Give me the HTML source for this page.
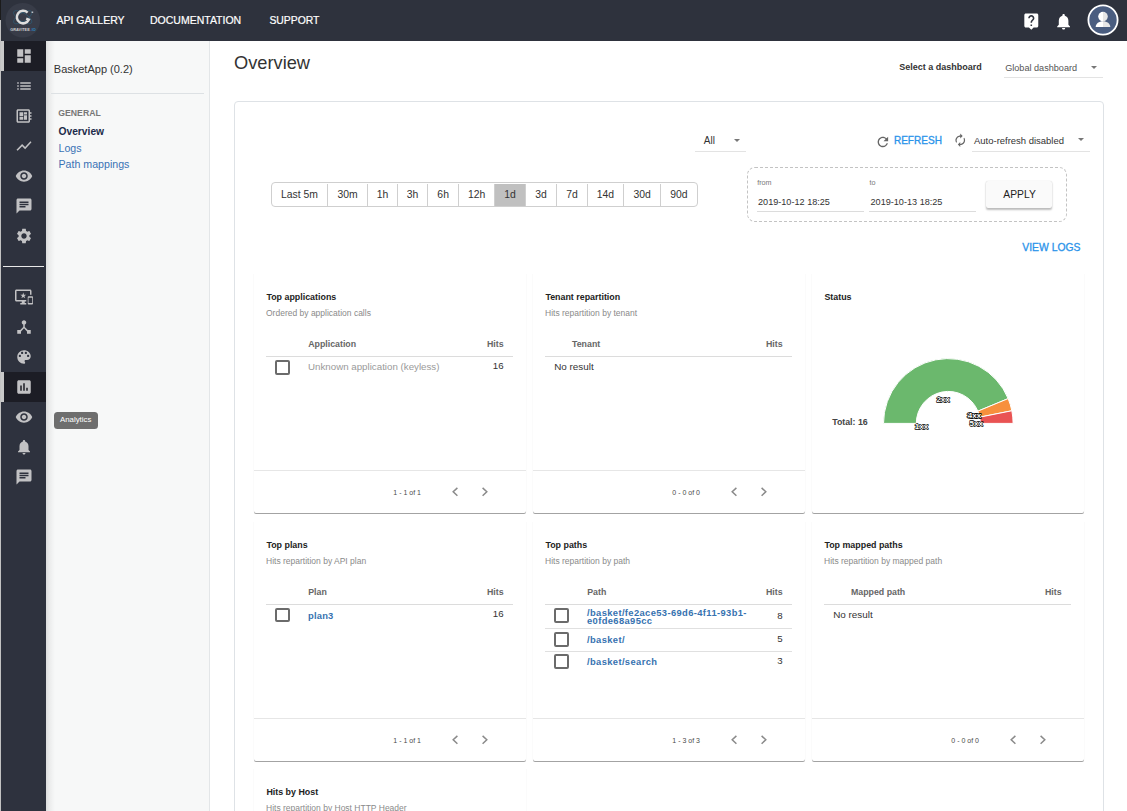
<!DOCTYPE html>
<html><head><meta charset="utf-8"><title>Overview</title><style>
*{box-sizing:border-box;margin:0;padding:0}
html,body{width:1127px;height:811px;overflow:hidden;background:#fff;font-family:"Liberation Sans",sans-serif;color:#333;position:relative}
.a{position:absolute}
.ic{position:absolute;overflow:visible}
.t{position:absolute;white-space:nowrap}
.tri{position:absolute;width:0;height:0;border-left:3px solid transparent;border-right:3px solid transparent;border-top:3.6px solid #777}
.card{position:absolute;background:#fff;border-radius:0 0 2px 2px;box-shadow:0 1px 0 #a3a3a3,1px 0 0 #fbfbfb,-1px 0 0 #fbfbfb}
.cb{position:absolute;width:14.6px;height:14.6px;border:2px solid #6b6b6b;border-radius:2px}
</style></head><body>
<div class="a" style="left:0px;top:0px;width:1127px;height:41px;background:#2e323d"></div>
<svg class="ic" style="left:4px;top:2px;width:38px;height:38px" viewBox="0 0 38 38"><circle cx="18.8" cy="18.3" r="17.3" fill="#383c48"/><ellipse cx="18.7" cy="15.2" rx="10.5" ry="4.2" fill="none" stroke="#2b6a8a" stroke-width="0.45" transform="rotate(32 18.7 15.2)"/><ellipse cx="18.7" cy="15.2" rx="10.5" ry="4.2" fill="none" stroke="#2b6a8a" stroke-width="0.45" transform="rotate(-32 18.7 15.2)"/><path d="M23.6 10.6 A6.3 6.3 0 1 0 24.9 17.6 L22.2 16.6" fill="none" stroke="#dedede" stroke-width="2.5"/><rect x="27.6" y="9.6" width="1.6" height="1.2" fill="#dedede"/><text x="6.2" y="28.9" font-family="Liberation Sans" font-size="3.9" font-weight="bold" fill="#cfcfcf">GRAVITEE</text><text x="26.6" y="28.9" font-family="Liberation Sans" font-size="3.9" font-weight="bold" fill="#2c8ccc">.IO</text></svg>
<div class="t" style="left:56.5px;top:14.80px;font-size:10.5px;line-height:10.5px;color:#fff;font-weight:normal;-webkit-text-stroke:.2px #fff">API GALLERY</div>
<div class="t" style="left:150px;top:14.80px;font-size:10.5px;line-height:10.5px;color:#fff;font-weight:normal;-webkit-text-stroke:.2px #fff">DOCUMENTATION</div>
<div class="t" style="left:269.4px;top:15.98px;font-size:10.4px;line-height:10.4px;color:#fff;font-weight:normal;-webkit-text-stroke:.2px #fff">SUPPORT</div>
<svg class="ic" style="left:1021.5px;top:12.3px;width:18.6px;height:18.6px;" viewBox="0 0 24 24"><path fill="#fff" d="M19 2H5c-1.11 0-2 .9-2 2v14c0 1.1.89 2 2 2h4l3 3 3-3h4c1.1 0 2-.9 2-2V4c0-1.1-.9-2-2-2zm-6 16h-2v-2h2v2zm2.07-7.75l-.9.92C13.45 11.9 13 12.5 13 14h-2v-.5c0-1.1.45-2.1 1.17-2.83l1.24-1.26c.37-.36.59-.86.59-1.41 0-1.1-.9-2-2-2s-2 .9-2 2H8c0-2.21 1.79-4 4-4s4 1.79 4 4c0 .88-.36 1.68-.93 2.25z"/></svg>
<svg class="ic" style="left:1053.6px;top:11.5px;width:19.2px;height:19.2px;" viewBox="0 0 24 24"><path fill="#fff" d="M12 22c1.1 0 2-.9 2-2h-4c0 1.1.89 2 2 2zm6-6v-5c0-3.07-1.64-5.64-4.5-6.32V4c0-.83-.67-1.5-1.5-1.5s-1.5.67-1.5 1.5v.68C7.63 5.36 6 7.92 6 11v5l-2 2v1h16v-1l-2-2z"/></svg>
<svg class="ic" style="left:1087px;top:4px;width:32px;height:32px" viewBox="0 0 32 32"><defs><linearGradient id="pg" x1="0" x2="1" y1="0" y2="0"><stop offset="0.5" stop-color="#ffffff"/><stop offset="0.5" stop-color="#e6e6e6"/></linearGradient></defs><circle cx="16" cy="16" r="14.6" fill="#4a5d80" stroke="#fff" stroke-width="1.8"/><circle cx="16" cy="12.6" r="4.8" fill="url(#pg)"/><path d="M8.7 23.1c0-3.6 3.3-5.9 7.3-5.9s7.3 2.3 7.3 5.9z" fill="url(#pg)"/></svg>
<div class="a" style="left:0px;top:41px;width:46px;height:770px;background:#2e323e"></div>
<div class="a" style="left:0px;top:0px;width:1px;height:811px;background:#c2c2c2"></div>
<div class="a" style="left:0px;top:0px;width:1px;height:20px;background:#1b1b1b"></div>
<div class="a" style="left:1px;top:41px;width:45px;height:30px;background:#1c1d25"></div>
<div class="a" style="left:1px;top:41px;width:3px;height:30px;background:#c8c8c8"></div>
<div class="a" style="left:1px;top:372px;width:45px;height:30px;background:#1c1d25"></div>
<div class="a" style="left:1px;top:372px;width:3px;height:30px;background:#c8c8c8"></div>
<div class="a" style="left:3px;top:266px;width:41px;height:1px;background:#e8e8e8"></div>
<svg class="ic" style="left:15px;top:47.4px;width:18px;height:18px;" viewBox="0 0 24 24"><path fill="#c2c2c4" d="M3 13h8V3H3v10zm0 8h8v-6H3v6zm10 0h8V11h-8v10zm0-18v6h8V3h-8z"/></svg>
<svg class="ic" style="left:15px;top:77.4px;width:18px;height:18px;" viewBox="0 0 24 24"><path fill="#c2c2c4" d="M3 13h2v-2H3v2zm0 4h2v-2H3v2zm0-8h2V7H3v2zm4 4h14v-2H7v2zm0 4h14v-2H7v2zM7 7v2h14V7H7z"/></svg>
<svg class="ic" style="left:15px;top:107.4px;width:18px;height:18px;" viewBox="0 0 24 24"><path fill="#c2c2c4" d="M22 9V7h-2V5c0-1.1-.9-2-2-2H4c-1.1 0-2 .9-2 2v14c0 1.1.9 2 2 2h14c1.1 0 2-.9 2-2v-2h2v-2h-2v-2h2v-2h-2V9h2zm-4 10H4V5h14v14zM6 13h5v4H6zm6-6h4v3h-4zM6 7h5v5H6zm6 4h4v6h-4z"/></svg>
<svg class="ic" style="left:15px;top:137.4px;width:18px;height:18px;" viewBox="0 0 24 24"><path fill="#c2c2c4" d="M3.5 18.49l6-6.01 4 4L22 6.92l-1.41-1.41-7.09 7.97-4-4L2 16.99z"/></svg>
<svg class="ic" style="left:15px;top:167.4px;width:18px;height:18px;" viewBox="0 0 24 24"><path fill="#c2c2c4" d="M12 4.5C7 4.5 2.73 7.61 1 12c1.730 4.39 6 7.5 11 7.5s9.27-3.11 11-7.5c-1.73-4.39-6-7.5-11-7.5zM12 17c-2.76 0-5-2.24-5-5s2.24-5 5-5 5 2.24 5 5-2.24 5-5 5zm0-8c-1.66 0-3 1.34-3 3s1.34 3 3 3 3-1.340 3-3-1.34-3-3-3z"/></svg>
<svg class="ic" style="left:15px;top:197.4px;width:18px;height:18px;" viewBox="0 0 24 24"><path fill="#c2c2c4" d="M20 2H4c-1.1 0-1.99.9-1.99 2L2 22l4-4h14c1.1 0 2-.9 2-2V4c0-1.1-.9-2-2-2zM6 9h12v2H6V9zm8 5H6v-2h8v2zm4-6H6V6h12v2z"/></svg>
<svg class="ic" style="left:15px;top:227.4px;width:18px;height:18px;" viewBox="0 0 24 24"><path fill="#c2c2c4" d="M19.14 12.94c.04-.3.06-.61.06-.94 0-.32-.02-.64-.07-.94l2.03-1.58c.18-.14.23-.41.12-.61l-1.92-3.32c-.12-.22-.37-.29-.59-.22l-2.39.96c-.5-.38-1.03-.7-1.62-.94l-.36-2.54c-.04-.24-.24-.41-.48-.41h-3.84c-.24 0-.43.17-.47.41l-.36 2.54c-.59.24-1.13.57-1.62.94l-2.39-.96c-.22-.08-.47 0-.59.22L2.74 8.87c-.12.21-.08.47.12.61l2.03 1.58c-.05.3-.09.63-.09.94s.02.64.07.94l-2.03 1.58c-.18.14-.23.41-.12.61l1.92 3.32c.12.22.37.29.59.22l2.39-.96c.5.38 1.03.7 1.62.94l.36 2.54c.05.24.24.41.48.41h3.84c.24 0 .44-.17.47-.41l.36-2.54c.59-.24 1.13-.56 1.62-.94l2.39.96c.22.08.47 0 .59-.22l1.92-3.32c.12-.22.07-.47-.12-.61l-2.01-1.58zM12 15.6c-1.98 0-3.6-1.62-3.6-3.6s1.62-3.6 3.6-3.6 3.6 1.62 3.6 3.6-1.62 3.6-3.6 3.6z"/></svg>
<svg class="ic" style="left:15px;top:288px;width:18px;height:18px;" viewBox="0 0 24 24"><path fill="#c2c2c4" d="M23 11.01L18 11c-.55 0-1 .45-1 1v9c0 .55.45 1 1 1h5c.55 0 1-.45 1-1v-9c0-.55-.45-.99-1-.99zM23 20h-5v-7h5v7zM20 2H2C.89 2 0 2.890 0 4v12c0 1.1.89 2 2 2h7v2H7v2h8v-2h-2v-2h2v-2H2V4h18v5h2V4c0-1.11-.9-2-2-2zm-8.03 7L11 6l-.97 3H7l2.47 1.76-.94 2.91 2.470-1.8 2.47 1.8-.94-2.91L15 9h-3.03z"/></svg>
<svg class="ic" style="left:15px;top:318px;width:18px;height:18px;" viewBox="0 0 24 24"><path fill="#c2c2c4" d="M17 16l-4-4V8.82C14.16 8.4 15 7.3 15 6c0-1.66-1.34-3-3-3S9 4.34 9 6c0 1.3.84 2.4 2 2.82V12l-4 4H3v5h5v-3.05l4-4.2 4 4.2V21h5v-5h-4z"/></svg>
<svg class="ic" style="left:15px;top:348px;width:18px;height:18px;" viewBox="0 0 24 24"><path fill="#c2c2c4" d="M12 3c-4.97 0-9 4.03-9 9s4.03 9 9 9c.83 0 1.5-.67 1.5-1.5 0-.39-.15-.74-.39-1.01-.23-.26-.38-.61-.38-.99 0-.83.67-1.5 1.5-1.5H16c2.76 0 5-2.24 5-5 0-4.42-4.03-8-9-8zm-5.5 9c-.83 0-1.5-.67-1.5-1.5S5.67 9 6.5 9 8 9.67 8 10.5 7.330 12 6.5 12zm3-4C8.67 8 8 7.33 8 6.5S8.67 5 9.5 5s1.5.67 1.5 1.5S10.33 8 9.5 8zm5 0c-.83 0-1.5-.67-1.5-1.5S13.67 5 14.5 5s1.5.67 1.5 1.5S15.33 8 14.5 8zm3 4c-.83 0-1.5-.67-1.5-1.5S16.67 9 17.5 9s1.5.67 1.5 1.5-.67 1.5-1.5 1.5z"/></svg>
<svg class="ic" style="left:15px;top:378px;width:18px;height:18px;" viewBox="0 0 24 24"><path fill="#c2c2c4" d="M19 3H5c-1.1 0-2 .9-2 2v14c0 1.1.9 2 2 2h14c1.1 0 2-.9 2-2V5c0-1.1-.9-2-2-2zM9 17H7v-7h2v7zm4 0h-2V7h2v10zm4 0h-2v-4h2v4z"/></svg>
<svg class="ic" style="left:15px;top:408px;width:18px;height:18px;" viewBox="0 0 24 24"><path fill="#c2c2c4" d="M12 4.5C7 4.5 2.73 7.61 1 12c1.730 4.39 6 7.5 11 7.5s9.27-3.11 11-7.5c-1.73-4.39-6-7.5-11-7.5zM12 17c-2.76 0-5-2.24-5-5s2.24-5 5-5 5 2.24 5 5-2.24 5-5 5zm0-8c-1.66 0-3 1.34-3 3s1.34 3 3 3 3-1.340 3-3-1.34-3-3-3z"/></svg>
<svg class="ic" style="left:15px;top:438px;width:18px;height:18px;" viewBox="0 0 24 24"><path fill="#c2c2c4" d="M12 22c1.1 0 2-.9 2-2h-4c0 1.1.89 2 2 2zm6-6v-5c0-3.07-1.64-5.64-4.5-6.32V4c0-.83-.67-1.5-1.5-1.5s-1.5.67-1.5 1.5v.68C7.63 5.36 6 7.92 6 11v5l-2 2v1h16v-1l-2-2z"/></svg>
<svg class="ic" style="left:15px;top:468px;width:18px;height:18px;" viewBox="0 0 24 24"><path fill="#c2c2c4" d="M20 2H4c-1.1 0-1.99.9-1.99 2L2 22l4-4h14c1.1 0 2-.9 2-2V4c0-1.1-.9-2-2-2zM6 9h12v2H6V9zm8 5H6v-2h8v2zm4-6H6V6h12v2z"/></svg>
<div class="a" style="left:46px;top:41px;width:164px;height:770px;background:#f7f8f8"></div>
<div class="a" style="left:46px;top:41px;width:9px;height:770px;background:linear-gradient(to right,rgba(0,0,0,.11),rgba(0,0,0,.05) 35%,rgba(0,0,0,0))"></div>
<div class="a" style="left:209px;top:41px;width:1px;height:770px;background:#e3e6e8"></div>
<div class="t" style="left:53.8px;top:64.27px;font-size:11px;line-height:11px;color:#333;font-weight:normal;">BasketApp (0.2)</div>
<div class="a" style="left:51px;top:93px;width:153px;height:1px;background:#dde1e4"></div>
<div class="t" style="left:58.3px;top:108.82px;font-size:8.7px;line-height:8.7px;color:#777;font-weight:bold;">GENERAL</div>
<div class="t" style="left:58.5px;top:126.81px;font-size:10.25px;line-height:10.25px;color:#1d2b4a;font-weight:bold;">Overview</div>
<div class="t" style="left:58.5px;top:143.41px;font-size:10.6px;line-height:10.6px;color:#3a72b5;font-weight:normal;">Logs</div>
<div class="t" style="left:58.5px;top:159.08px;font-size:10.64px;line-height:10.64px;color:#3a72b5;font-weight:normal;">Path mappings</div>
<div class="a" style="left:54px;top:412px;width:44px;height:17px;background:#6e6e6e;border-radius:3.5px"></div>
<div class="t" style="left:60px;top:415.74px;font-size:7.85px;line-height:7.85px;color:#fff;font-weight:normal;">Analytics</div>
<div class="t" style="left:234px;top:54.33px;font-size:18.24px;line-height:18.24px;color:#333;font-weight:normal;">Overview</div>
<div class="t" style="left:899.2px;top:63.27px;font-size:9.0px;line-height:9.0px;color:#333;font-weight:bold;">Select a dashboard</div>
<div class="t" style="left:1005.2px;top:64.17px;font-size:9.12px;line-height:9.12px;color:#555;font-weight:normal;">Global dashboard</div>
<div class="tri" style="left:1090.5px;top:65.6px"></div>
<div class="a" style="left:1004px;top:77px;width:99px;height:1px;background:#e3e3e3"></div>
<div class="a" style="left:234px;top:101px;width:870px;height:760px;border:1px solid #dee2e6;border-radius:4px"></div>
<div class="t" style="left:703.8px;top:136.32px;font-size:10px;line-height:10px;color:#333;font-weight:normal;">All</div>
<div class="tri" style="left:734.4px;top:138.5px"></div>
<div class="a" style="left:695px;top:151px;width:51px;height:1px;background:#e3e3e3"></div>
<svg class="ic" style="left:874.7px;top:133.5px;width:15.75px;height:15.75px;" viewBox="0 0 24 24"><path fill="#666" d="M17.65 6.35C16.2 4.9 14.21 4 12 4c-4.42 0-7.99 3.58-7.99 8s3.57 8 7.99 8c3.73 0 6.84-2.55 7.73-6h-2.08c-.82 2.33-3.04 4-5.65 4-3.31 0-6-2.69-6-6s2.69-6 6-6c1.66 0 3.14.69 4.22 1.78L13 11h7V4l-2.35 2.35z"/></svg>
<div class="t" style="left:893.9px;top:136.28px;font-size:10.05px;line-height:10.05px;color:#2a93ea;font-weight:normal;-webkit-text-stroke:.3px #2a93ea">REFRESH</div>
<svg class="ic" style="left:952.9px;top:133.2px;width:14.5px;height:14.5px;" viewBox="0 0 24 24"><path fill="#666" d="M12 6v3l4-4-4-4v3c-4.42 0-8 3.58-8 8 0 1.57.46 3.03 1.24 4.26L6.7 14.8c-.45-.83-.7-1.79-.7-2.8 0-3.31 2.69-6 6-6zm6.76 1.74L17.3 9.2c.44.84.7 1.79.7 2.8 0 3.31-2.69 6-6 6v-3l-4 4 4 4v-3c4.42 0 8-3.58 8-8 0-1.57-.46-3.03-1.24-4.26z"/></svg>
<div class="t" style="left:974px;top:135.97px;font-size:9.47px;line-height:9.47px;color:#333;font-weight:normal;">Auto-refresh disabled</div>
<div class="tri" style="left:1077.6px;top:138.3px"></div>
<div class="a" style="left:972px;top:151px;width:118px;height:1px;background:#e3e3e3"></div>
<div class="a" style="left:271px;top:182px;width:426.7px;height:24.5px;border:1px solid #cfcfcf;border-radius:4px"></div>
<div class="t" style="left:271.5px;width:56.0px;top:190.38px;font-size:10.4px;line-height:10.4px;text-align:center;color:#333">Last 5m</div>
<div class="a" style="left:327.0px;top:183.5px;width:1px;height:22px;background:#cfcfcf"></div>
<div class="t" style="left:327.5px;width:40.0px;top:190.38px;font-size:10.4px;line-height:10.4px;text-align:center;color:#333">30m</div>
<div class="a" style="left:367.0px;top:183.5px;width:1px;height:22px;background:#cfcfcf"></div>
<div class="t" style="left:367.5px;width:30.0px;top:190.38px;font-size:10.4px;line-height:10.4px;text-align:center;color:#333">1h</div>
<div class="a" style="left:397.0px;top:183.5px;width:1px;height:22px;background:#cfcfcf"></div>
<div class="t" style="left:397.5px;width:30.0px;top:190.38px;font-size:10.4px;line-height:10.4px;text-align:center;color:#333">3h</div>
<div class="a" style="left:427.0px;top:183.5px;width:1px;height:22px;background:#cfcfcf"></div>
<div class="t" style="left:427.5px;width:31.30000000000001px;top:190.38px;font-size:10.4px;line-height:10.4px;text-align:center;color:#333">6h</div>
<div class="a" style="left:458.3px;top:183.5px;width:1px;height:22px;background:#cfcfcf"></div>
<div class="t" style="left:458.8px;width:35.69999999999999px;top:190.38px;font-size:10.4px;line-height:10.4px;text-align:center;color:#333">12h</div>
<div class="a" style="left:494.5px;top:183.5px;width:31.0px;height:22px;background:#c0c0c0"></div>
<div class="a" style="left:494.0px;top:183.5px;width:1px;height:22px;background:#cfcfcf"></div>
<div class="t" style="left:494.5px;width:31.0px;top:190.38px;font-size:10.4px;line-height:10.4px;text-align:center;color:#333">1d</div>
<div class="a" style="left:525.0px;top:183.5px;width:1px;height:22px;background:#cfcfcf"></div>
<div class="t" style="left:525.5px;width:31.100000000000023px;top:190.38px;font-size:10.4px;line-height:10.4px;text-align:center;color:#333">3d</div>
<div class="a" style="left:556.1px;top:183.5px;width:1px;height:22px;background:#cfcfcf"></div>
<div class="t" style="left:556.6px;width:30.799999999999955px;top:190.38px;font-size:10.4px;line-height:10.4px;text-align:center;color:#333">7d</div>
<div class="a" style="left:586.9px;top:183.5px;width:1px;height:22px;background:#cfcfcf"></div>
<div class="t" style="left:587.4px;width:36.200000000000045px;top:190.38px;font-size:10.4px;line-height:10.4px;text-align:center;color:#333">14d</div>
<div class="a" style="left:623.1px;top:183.5px;width:1px;height:22px;background:#cfcfcf"></div>
<div class="t" style="left:623.6px;width:37.0px;top:190.38px;font-size:10.4px;line-height:10.4px;text-align:center;color:#333">30d</div>
<div class="a" style="left:660.1px;top:183.5px;width:1px;height:22px;background:#cfcfcf"></div>
<div class="t" style="left:660.6px;width:36.60000000000002px;top:190.38px;font-size:10.4px;line-height:10.4px;text-align:center;color:#333">90d</div>
<div class="a" style="left:747px;top:166.5px;width:320px;height:55.5px;border:1px dashed #c3c3c3;border-radius:8px"></div>
<div class="t" style="left:757.2px;top:179.19px;font-size:7.2px;line-height:7.2px;color:#777;font-weight:normal;">from</div>
<div class="t" style="left:869.6px;top:179.19px;font-size:7.2px;line-height:7.2px;color:#777;font-weight:normal;">to</div>
<div class="t" style="left:758px;top:197.87px;font-size:9.12px;line-height:9.12px;color:#333;font-weight:normal;">2019-10-12 18:25</div>
<div class="t" style="left:870.5px;top:197.87px;font-size:9.12px;line-height:9.12px;color:#333;font-weight:normal;">2019-10-13 18:25</div>
<div class="a" style="left:757px;top:211px;width:107px;height:1px;background:#dcdcdc"></div>
<div class="a" style="left:869px;top:211px;width:106.5px;height:1px;background:#dcdcdc"></div>
<div class="a" style="left:985.6px;top:181.2px;width:66.4px;height:27px;background:#fafafa;border-radius:2px;box-shadow:0 1.5px 2px rgba(0,0,0,.26),0 0 1px rgba(0,0,0,.14)"></div>
<div class="t" style="left:1003.3px;top:189.95px;font-size:10.32px;line-height:10.32px;color:#222;font-weight:normal;">APPLY</div>
<div class="t" style="left:1022.3px;top:243.39px;font-size:10.39px;line-height:10.39px;color:#2a93ea;font-weight:normal;-webkit-text-stroke:.3px #2a93ea">VIEW LOGS</div>
<div class="card" style="left:254px;top:274px;width:272px;height:239px"></div>
<div class="t" style="left:266.4px;top:293.45px;font-size:8.9px;line-height:8.9px;color:#222;font-weight:bold;">Top applications</div>
<div class="t" style="left:266px;top:309.09px;font-size:8.5px;line-height:8.5px;color:#8a8a8a;font-weight:normal;">Ordered by application calls</div>
<div class="t" style="left:308.2px;top:340.04px;font-size:8.8px;line-height:8.8px;color:#666;font-weight:bold;">Application</div>
<div class="t" style="right:623.4px;top:340.04px;font-size:8.8px;line-height:8.8px;color:#666;font-weight:bold;text-align:right;">Hits</div>
<div class="a" style="left:266px;top:356px;width:247px;height:1px;background:#dcdcdc"></div>
<div class="a" style="left:254px;top:470px;width:272px;height:1px;background:#e6e6e6"></div>
<div class="t" style="left:393.3px;top:489.06px;font-size:7.0px;line-height:7.0px;color:#4a4a4a;font-weight:normal;">1 - 1 of 1</div>
<svg class="ic" style="left:254px;top:274px;width:1px;height:1px"><path d="M203.4 213.9L199.2 217.8L203.4 221.7M228.6 213.9L232.8 217.8L228.6 221.7" fill="none" stroke="#8a8a8a" stroke-width="1.5"/></svg>
<div class="cb" style="left:275px;top:360.4px"></div>
<div class="t" style="left:308px;top:362.34px;font-size:9.74px;line-height:9.74px;color:#9a9a9a;font-weight:normal;">Unknown application (keyless)</div>
<div class="t" style="right:623.4px;top:361.17px;font-size:9.7px;line-height:9.7px;color:#333;font-weight:normal;text-align:right;">16</div>
<div class="card" style="left:533px;top:274px;width:272px;height:239px"></div>
<div class="t" style="left:545.4px;top:293.45px;font-size:8.9px;line-height:8.9px;color:#222;font-weight:bold;">Tenant repartition</div>
<div class="t" style="left:545px;top:309.09px;font-size:8.5px;line-height:8.5px;color:#8a8a8a;font-weight:normal;">Hits repartition by tenant</div>
<div class="t" style="left:572px;top:340.04px;font-size:8.8px;line-height:8.8px;color:#666;font-weight:bold;">Tenant</div>
<div class="t" style="right:344.4px;top:340.04px;font-size:8.8px;line-height:8.8px;color:#666;font-weight:bold;text-align:right;">Hits</div>
<div class="a" style="left:545px;top:356px;width:247px;height:1px;background:#dcdcdc"></div>
<div class="a" style="left:533px;top:470px;width:272px;height:1px;background:#e6e6e6"></div>
<div class="t" style="left:672.3px;top:489.06px;font-size:7.0px;line-height:7.0px;color:#4a4a4a;font-weight:normal;">0 - 0 of 0</div>
<svg class="ic" style="left:533px;top:274px;width:1px;height:1px"><path d="M203.4 213.9L199.2 217.8L203.4 221.7M228.6 213.9L232.8 217.8L228.6 221.7" fill="none" stroke="#8a8a8a" stroke-width="1.5"/></svg>
<div class="t" style="left:554.2px;top:362.40px;font-size:9.9px;line-height:9.9px;color:#333;font-weight:normal;">No result</div>
<div class="card" style="left:812px;top:274px;width:272px;height:239px"></div>
<div class="t" style="left:824.4px;top:293.45px;font-size:8.9px;line-height:8.9px;color:#222;font-weight:bold;">Status</div>
<div class="t" style="left:824px;top:309.09px;font-size:8.5px;line-height:8.5px;color:#8a8a8a;font-weight:normal;"></div>
<svg class="ic" style="left:812px;top:274px;width:272px;height:239px" viewBox="0 0 272 239"><path d="M71.50 149.40 A64.8 64.8 0 0 1 196.17 124.60 L165.86 137.15 A32 32 0 0 0 104.30 149.40Z" fill="#6bb86d" stroke="#fff" stroke-width="1"/><path d="M196.17 124.60 A64.8 64.8 0 0 1 199.85 136.76 L167.69 143.16 A32 32 0 0 0 165.86 137.15Z" fill="#f7903d" stroke="#fff" stroke-width="1"/><path d="M199.85 136.76 A64.8 64.8 0 0 1 201.10 149.40 L168.30 149.40 A32 32 0 0 0 167.69 143.16Z" fill="#e95353" stroke="#fff" stroke-width="1"/><g font-family="Liberation Sans" font-size="8" font-weight="bold" fill="#fff" stroke="#000" stroke-width="1.3" paint-order="stroke" stroke-linejoin="round" text-anchor="middle"><text x="131.10000000000002" y="128.2">2xx</text><text x="109.5" y="155.10000000000002">1xx</text><text x="161.60000000000002" y="143.8">3xx</text><text x="162.5" y="144.39999999999998">4xx</text><text x="164.29999999999995" y="152.10000000000002">5xx</text></g></svg>
<div class="t" style="left:832.2px;top:417.94px;font-size:8.8px;line-height:8.8px;color:#444;font-weight:bold;">Total: 16</div>
<div class="card" style="left:254px;top:521.5px;width:272px;height:239px"></div>
<div class="t" style="left:266.4px;top:540.95px;font-size:8.9px;line-height:8.9px;color:#222;font-weight:bold;">Top plans</div>
<div class="t" style="left:266px;top:556.59px;font-size:8.5px;line-height:8.5px;color:#8a8a8a;font-weight:normal;">Hits repartition by API plan</div>
<div class="t" style="left:308.2px;top:587.54px;font-size:8.8px;line-height:8.8px;color:#666;font-weight:bold;">Plan</div>
<div class="t" style="right:623.4px;top:587.54px;font-size:8.8px;line-height:8.8px;color:#666;font-weight:bold;text-align:right;">Hits</div>
<div class="a" style="left:266px;top:603.5px;width:247px;height:1px;background:#dcdcdc"></div>
<div class="a" style="left:254px;top:717.5px;width:272px;height:1px;background:#e6e6e6"></div>
<div class="t" style="left:393.3px;top:736.56px;font-size:7.0px;line-height:7.0px;color:#4a4a4a;font-weight:normal;">1 - 1 of 1</div>
<svg class="ic" style="left:254px;top:521.5px;width:1px;height:1px"><path d="M203.4 213.9L199.2 217.8L203.4 221.7M228.6 213.9L232.8 217.8L228.6 221.7" fill="none" stroke="#8a8a8a" stroke-width="1.5"/></svg>
<div class="cb" style="left:275px;top:607.9px"></div>
<div class="t" style="left:308px;top:611.33px;font-size:9.4px;line-height:9.4px;color:#3672b0;font-weight:bold;letter-spacing:.2px">plan3</div>
<div class="t" style="right:623.4px;top:609.37px;font-size:9.7px;line-height:9.7px;color:#333;font-weight:normal;text-align:right;">16</div>
<div class="card" style="left:533px;top:521.5px;width:272px;height:239px"></div>
<div class="t" style="left:545.4px;top:540.95px;font-size:8.9px;line-height:8.9px;color:#222;font-weight:bold;">Top paths</div>
<div class="t" style="left:545px;top:556.59px;font-size:8.5px;line-height:8.5px;color:#8a8a8a;font-weight:normal;">Hits repartition by path</div>
<div class="t" style="left:587.2px;top:587.54px;font-size:8.8px;line-height:8.8px;color:#666;font-weight:bold;">Path</div>
<div class="t" style="right:344.4px;top:587.54px;font-size:8.8px;line-height:8.8px;color:#666;font-weight:bold;text-align:right;">Hits</div>
<div class="a" style="left:545px;top:603.5px;width:247px;height:1px;background:#dcdcdc"></div>
<div class="a" style="left:533px;top:717.5px;width:272px;height:1px;background:#e6e6e6"></div>
<div class="t" style="left:672.3px;top:736.56px;font-size:7.0px;line-height:7.0px;color:#4a4a4a;font-weight:normal;">1 - 3 of 3</div>
<svg class="ic" style="left:533px;top:521.5px;width:1px;height:1px"><path d="M203.4 213.9L199.2 217.8L203.4 221.7M228.6 213.9L232.8 217.8L228.6 221.7" fill="none" stroke="#8a8a8a" stroke-width="1.5"/></svg>
<div class="cb" style="left:554px;top:608.4px"></div>
<div class="t" style="left:587px;top:608.43px;font-size:9.4px;line-height:9.4px;color:#3672b0;font-weight:bold;letter-spacing:.37px">/basket/fe2ace53-69d6-4f11-93b1-</div>
<div class="t" style="left:587px;top:616.43px;font-size:9.4px;line-height:9.4px;color:#3672b0;font-weight:bold;letter-spacing:.37px">e0fde68a95cc</div>
<div class="t" style="right:344.4px;top:611.37px;font-size:9.7px;line-height:9.7px;color:#333;font-weight:normal;text-align:right;">8</div>
<div class="a" style="left:545px;top:628.3px;width:247px;height:1px;background:#e0e0e0"></div>
<div class="cb" style="left:554px;top:632.1px"></div>
<div class="t" style="left:587px;top:635.03px;font-size:9.4px;line-height:9.4px;color:#3672b0;font-weight:bold;letter-spacing:.37px">/basket/</div>
<div class="t" style="right:344.4px;top:633.67px;font-size:9.7px;line-height:9.7px;color:#333;font-weight:normal;text-align:right;">5</div>
<div class="a" style="left:545px;top:650.5px;width:247px;height:1px;background:#e0e0e0"></div>
<div class="cb" style="left:554px;top:654.3px"></div>
<div class="t" style="left:587px;top:656.73px;font-size:9.4px;line-height:9.4px;color:#3672b0;font-weight:bold;letter-spacing:.37px">/basket/search</div>
<div class="t" style="right:344.4px;top:655.67px;font-size:9.7px;line-height:9.7px;color:#333;font-weight:normal;text-align:right;">3</div>
<div class="card" style="left:812px;top:521.5px;width:272px;height:239px"></div>
<div class="t" style="left:824.4px;top:540.95px;font-size:8.9px;line-height:8.9px;color:#222;font-weight:bold;">Top mapped paths</div>
<div class="t" style="left:824px;top:556.59px;font-size:8.5px;line-height:8.5px;color:#8a8a8a;font-weight:normal;">Hits repartition by mapped path</div>
<div class="t" style="left:851px;top:587.54px;font-size:8.8px;line-height:8.8px;color:#666;font-weight:bold;">Mapped path</div>
<div class="t" style="right:65.40000000000009px;top:587.54px;font-size:8.8px;line-height:8.8px;color:#666;font-weight:bold;text-align:right;">Hits</div>
<div class="a" style="left:824px;top:603.5px;width:247px;height:1px;background:#dcdcdc"></div>
<div class="a" style="left:812px;top:717.5px;width:272px;height:1px;background:#e6e6e6"></div>
<div class="t" style="left:951.3px;top:736.56px;font-size:7.0px;line-height:7.0px;color:#4a4a4a;font-weight:normal;">0 - 0 of 0</div>
<svg class="ic" style="left:812px;top:521.5px;width:1px;height:1px"><path d="M203.4 213.9L199.2 217.8L203.4 221.7M228.6 213.9L232.8 217.8L228.6 221.7" fill="none" stroke="#8a8a8a" stroke-width="1.5"/></svg>
<div class="t" style="left:833.2px;top:609.90px;font-size:9.9px;line-height:9.9px;color:#333;font-weight:normal;">No result</div>
<div class="card" style="left:254px;top:769px;width:272px;height:239px"></div>
<div class="t" style="left:266.4px;top:788.45px;font-size:8.9px;line-height:8.9px;color:#222;font-weight:bold;">Hits by Host</div>
<div class="t" style="left:266px;top:804.09px;font-size:8.5px;line-height:8.5px;color:#8a8a8a;font-weight:normal;">Hits repartition by Host HTTP Header</div>
</body></html>
